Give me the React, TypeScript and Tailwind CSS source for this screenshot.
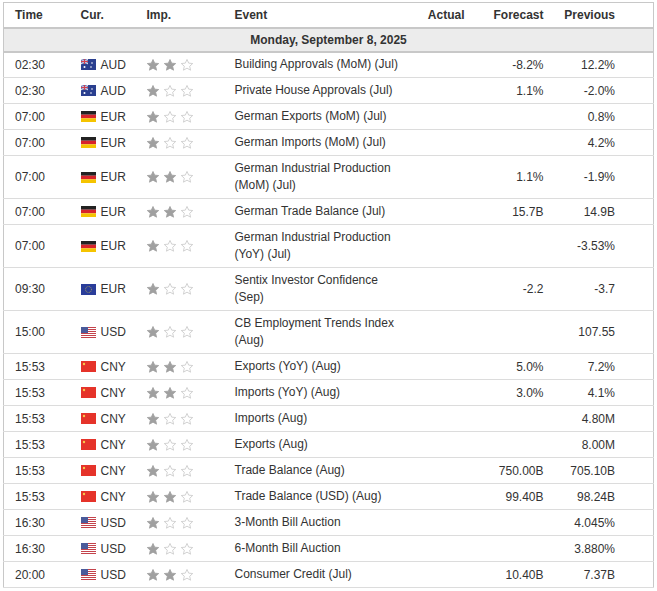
import React from "react";

type R = [string, string, number, string, string, string, string];
const rows: R[] = [
  ["02:30","AUD",2,"Building Approvals (MoM) (Jul)","","-8.2%","12.2%"],
  ["02:30","AUD",1,"Private House Approvals (Jul)","","1.1%","-2.0%"],
  ["07:00","EUR",1,"German Exports (MoM) (Jul)","","","0.8%"],
  ["07:00","EUR",1,"German Imports (MoM) (Jul)","","","4.2%"],
  ["07:00","EUR",2,"German Industrial Production (MoM) (Jul)","","1.1%","-1.9%"],
  ["07:00","EUR",2,"German Trade Balance (Jul)","","15.7B","14.9B"],
  ["07:00","EUR",1,"German Industrial Production (YoY) (Jul)","","","-3.53%"],
  ["09:30","EU",1,"Sentix Investor Confidence (Sep)","","-2.2","-3.7"],
  ["15:00","USD",1,"CB Employment Trends Index (Aug)","","","107.55"],
  ["15:53","CNY",2,"Exports (YoY) (Aug)","","5.0%","7.2%"],
  ["15:53","CNY",2,"Imports (YoY) (Aug)","","3.0%","4.1%"],
  ["15:53","CNY",1,"Imports (Aug)","","","4.80M"],
  ["15:53","CNY",1,"Exports (Aug)","","","8.00M"],
  ["15:53","CNY",1,"Trade Balance (Aug)","","750.00B","705.10B"],
  ["15:53","CNY",2,"Trade Balance (USD) (Aug)","","99.40B","98.24B"],
  ["16:30","USD",1,"3-Month Bill Auction","","","4.045%"],
  ["16:30","USD",1,"6-Month Bill Auction","","","3.880%"],
  ["20:00","USD",2,"Consumer Credit (Jul)","","10.40B","7.37B"],
];
const twoLine = new Set([4, 6, 7, 8]);

function Flag({ c }: { c: string }) {
  if (c === "AUD")
    return (<svg width="15" height="11" viewBox="0 0 15 11"><rect width="15" height="11" fill="#2a3f8f"/><rect width="7" height="5" fill="#6d7cb8"/><path d="M0 0L7 5M7 0L0 5" stroke="#e6e6f0" strokeWidth="1"/><path d="M3.5 0V5M0 2.5H7" stroke="#d04050" strokeWidth="1.2"/><circle cx="11" cy="4" r="0.8" fill="#fff"/><circle cx="10" cy="8" r="0.8" fill="#fff"/><circle cx="3.5" cy="8" r="1" fill="#fff"/></svg>);
  if (c === "EUR")
    return (<svg width="15" height="11" viewBox="0 0 15 11"><rect width="15" height="3.7" fill="#222"/><rect y="3.7" width="15" height="3.6" fill="#d8242b"/><rect y="7.3" width="15" height="3.7" fill="#f5c400"/></svg>);
  if (c === "EU")
    return (<svg width="15" height="11" viewBox="0 0 15 11"><rect width="15" height="11" fill="#2a3d9a"/><circle cx="7.5" cy="5.5" r="3" fill="none" stroke="#c9b94a" strokeWidth="0.8" strokeDasharray="0.8 0.8"/></svg>);
  if (c === "USD")
    return (<svg width="15" height="11" viewBox="0 0 15 11"><rect width="15" height="11" fill="#fff"/>{[0,2,4,6,8,10].map(y=>(<rect key={y} y={y} width="15" height="1" fill="#c4434b"/>))}<rect width="7" height="6" fill="#4a5a9a"/></svg>);
  return (<svg width="15" height="11" viewBox="0 0 15 11"><rect width="15" height="11" fill="#e5332a"/><circle cx="3" cy="3" r="1.2" fill="#f7c94b"/></svg>);
}

function Star({ f }: { f: boolean }) {
  return (
    <svg width="14" height="14" viewBox="0 0 24 24">
      <path d="M12 2.5l2.9 6.3 6.9.7-5.2 4.6 1.5 6.8L12 17.4 5.9 20.9l1.5-6.8-5.2-4.6 6.9-.7z"
        fill={f ? "#a0a0a0" : "none"} stroke={f ? "#a0a0a0" : "#c8c8c8"} strokeWidth="1.4" strokeLinejoin="round"/>
    </svg>
  );
}

export default function App() {
  return (
    <div className="bg-white pt-[2px] px-[3px] text-[12px] text-[#333]" style={{ fontFamily: "Helvetica, Arial, 'Liberation Sans', sans-serif" }}>
      <table className="w-[650px] border-collapse border border-[#c8c8c8] table-fixed">
        <colgroup>
          <col className="w-[67px]" /><col className="w-[66px]" /><col className="w-[89px]" />
          <col className="w-[185px]" /><col className="w-[64px]" /><col className="w-[79px]" /><col className="w-[100px]" />
        </colgroup>
        <thead>
          <tr className="h-[25px] font-bold border-b-2 border-[#c8c8c8]">
            <th className="text-left pl-[11px] font-bold">Time</th>
            <th className="text-left pl-[10px] font-bold">Cur.</th>
            <th className="text-left pl-[10px] font-bold">Imp.</th>
            <th className="text-left pl-[9px] font-bold">Event</th>
            <th className="text-right pr-[10px] font-bold">Actual</th>
            <th className="text-right pr-[10px] font-bold">Forecast</th>
            <th className="text-right pr-[38px] font-bold">Previous</th>
          </tr>
        </thead>
        <tbody>
          <tr className="h-[24px] bg-[#ececec] border-b-2 border-[#c8c8c8]">
            <td colSpan={7} className="text-center font-bold">Monday, September 8, 2025</td>
          </tr>
          {rows.map((r, i) => {
            const two = twoLine.has(i);
            return (
              <tr key={i} className={`${two ? "h-[43px]" : "h-[26px]"} border-b border-[#dcdcdc]`}>
                <td className="pl-[11px]">{r[0]}</td>
                <td className="pl-[10px]"><div className="flex items-center gap-[5px]"><Flag c={r[1]} /><span>{r[1] === "EU" ? "EUR" : r[1]}</span></div></td>
                <td className="pl-[9px]"><div className="flex gap-[3px]">{[0,1,2].map(k => <Star key={k} f={k < r[2]} />)}</div></td>
                <td className="pl-[9px] pr-[10px] leading-[17px]">{r[3]}</td>
                <td className="text-right pr-[10px]">{r[4]}</td>
                <td className="text-right pr-[10px]">{r[5]}</td>
                <td className="text-right pr-[38px]">{r[6]}</td>
              </tr>
            );
          })}
        </tbody>
      </table>
    </div>
  );
}
